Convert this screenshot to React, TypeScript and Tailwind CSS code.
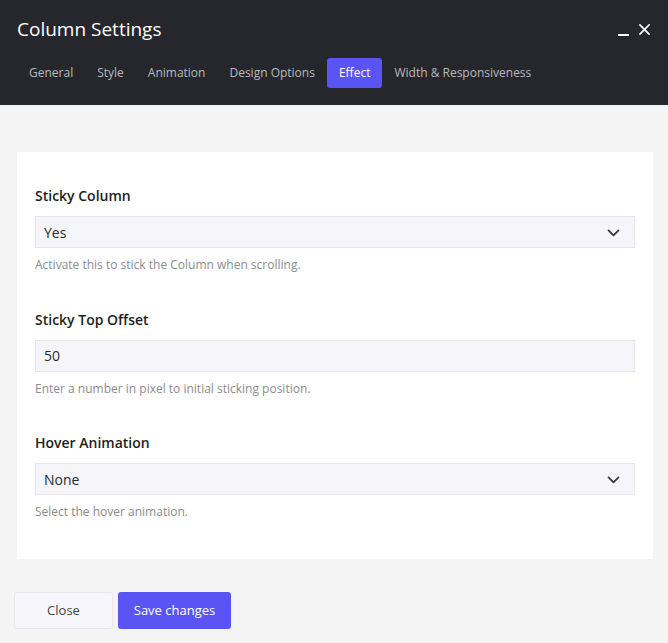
import React from 'react';

const tabs = ['General', 'Style', 'Animation', 'Design Options', 'Effect', 'Width & Responsiveness'];

const Chevron = () => (
  <svg viewBox="0 0 24 24" fill="none" stroke="currentColor" strokeWidth="2.6" strokeLinecap="round" strokeLinejoin="round" className="w-[17px] h-[17px] text-[#3a3a3a]">
    <polyline points="5 9 12 16 19 9" />
  </svg>
);

const Field: React.FC<{ label: string; value: string; help: string; select?: boolean }> = ({ label, value, help, select }) => (
  <div className="flex flex-col">
    <label className="text-[14px] leading-5 font-semibold text-[#1e1e1e]">{label}</label>
    <div className="mt-[10px] h-8 flex items-center justify-between bg-[#f6f6fa] border border-[#e6e6ee] pl-[8px] pr-[12px] text-[14px] text-[#2a2a2a]">
      <span>{value}</span>
      {select && <Chevron />}
    </div>
    <p className="mt-2 text-[12px] leading-[18px] text-[#8c8c8c]">{help}</p>
  </div>
);

export default function App() {
  return (
    <div className="w-[668px] h-[643px] flex flex-col bg-[#f4f4f4] overflow-hidden" style={{ fontFamily: '"Open Sans", sans-serif' }}>
      {/* Header */}
      <div className="bg-[#25272c] px-[17px] pt-[14px] pb-[17px]">
        <div className="flex items-center justify-between h-[30px]">
          <h1 className="text-[19px] font-normal text-white leading-[30px]">Column Settings</h1>
          <div className="flex items-center gap-[10px] pr-[1px] text-white">
            <span className="block w-[11px] h-[2px] bg-white mt-[12px]" />
            <svg viewBox="0 0 12 12" className="w-[11px] h-[11px]" stroke="currentColor" strokeWidth="1.8" strokeLinecap="round">
              <line x1="1" y1="1" x2="11" y2="11" />
              <line x1="11" y1="1" x2="1" y2="11" />
            </svg>
          </div>
        </div>
        <div className="mt-[14px] flex items-center">
          {tabs.map((t) => (
            <button
              key={t}
              className={`h-[30px] px-3 rounded-[3px] text-[12px] ${t === 'Effect' ? 'bg-[#5b54f5] text-white' : 'text-[#b9b9bc]'}`}
            >
              {t}
            </button>
          ))}
        </div>
      </div>

      {/* Body */}
      <div className="flex-1 pt-[47px] pl-[17px] pr-[15px]">
        <div className="bg-white px-[18px] pt-[34px] pb-[38px] flex flex-col gap-[35.5px]">
          <Field label="Sticky Column" value="Yes" help="Activate this to stick the Column when scrolling." select />
          <Field label="Sticky Top Offset" value="50" help="Enter a number in pixel to initial sticking position." />
          <Field label="Hover Animation" value="None" help="Select the hover animation." select />
        </div>
        <div className="mt-[33px] -ml-[3px] flex items-center gap-[5px]">
          <button className="w-[99px] h-[37px] rounded-[3px] bg-[#f7f7fb] border border-[#e6e6ee] text-[13px] text-[#444]">Close</button>
          <button className="w-[113px] h-[37px] rounded-[3px] bg-[#5b54f5] text-[13px] text-white">Save changes</button>
        </div>
      </div>
    </div>
  );
}
